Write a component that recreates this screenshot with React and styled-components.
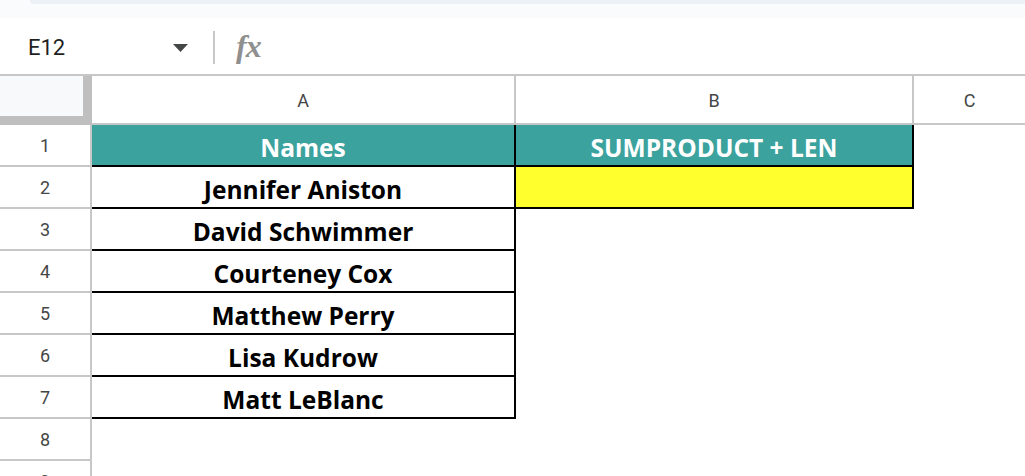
import styled, { createGlobalStyle } from 'styled-components';

const GlobalStyle = createGlobalStyle`
	html, body {
		margin: 0;
		padding: 0;
		background: #ffffff;
		font-family: Roboto, 'Liberation Sans', Arial, sans-serif;
	}
`;

const Page = styled.div`
	width: 1025px;
	height: 476px;
	overflow: hidden;
	background: #ffffff;
`;

const TopStrip = styled.div`
	height: 18px;
	background: #f9fbfd;
`;

const SearchEdge = styled.div`
	margin-left: 30px;
	height: 4px;
	background: #ebf1f7;
	border-bottom-left-radius: 8px;
`;

const FormulaBar = styled.div`
	height: 58px;
	display: flex;
	align-items: center;
	padding-top: 3px;
	border-bottom: 2px solid #c7c7c7;
	box-sizing: border-box;
`;

const NameBox = styled.div`
	width: 145px;
	padding-left: 28px;
	font-size: 22px;
	color: #1f1f1f;
`;

const Caret = styled.svg`
	width: 15px;
	height: 8px;
	margin-right: 25px;
`;

const Divider = styled.div`
	width: 2px;
	height: 33px;
	background: #c7c7c7;
	margin-right: 21px;
`;

const FxLabel = styled.span`
	font-family: 'Liberation Serif', 'DejaVu Serif', serif;
	font-style: italic;
	font-weight: bold;
	font-size: 32px;
	color: #8f8f8f;
	letter-spacing: -1px;
	margin-top: -2px;
`;

const Sheet = styled.div`
	display: grid;
	grid-template-columns: 92px 424px 398px 1fr;
	grid-auto-rows: 42px;
	grid-template-rows: 49px;
`;

const Corner = styled.div`
	box-sizing: border-box;
	background: #f8f9fa;
	border-right: 9px solid #bfbfbf;
	border-bottom: 9px solid #bfbfbf;
`;

const ColHead = styled.div`
	box-sizing: border-box;
	display: flex;
	align-items: center;
	justify-content: center;
	font-size: 18px;
	color: #444746;
	border-bottom: 2px solid #c7c7c7;
	border-right: ${(p) => (p.$last ? 'none' : '2px solid #c7c7c7')};
	padding-top: 2px;
`;

const RowHead = styled.div`
	box-sizing: border-box;
	display: flex;
	align-items: center;
	justify-content: center;
	font-size: 18px;
	color: #444746;
	border-right: 2px solid #c7c7c7;
	border-bottom: 2px solid #c7c7c7;
`;

const Cell = styled.div`
	box-sizing: border-box;
	display: flex;
	align-items: center;
	justify-content: center;
	padding-top: 5px;
	font-family: 'Open Sans', Lato, sans-serif;
	font-weight: 700;
	font-size: 24.5px;
	color: ${(p) => (p.$head ? '#ffffff' : '#000000')};
	background: ${(p) => p.$fill || 'transparent'};
	border-right: ${(p) => (p.$boxed ? '2px solid #000' : 'none')};
	border-bottom: ${(p) => (p.$boxed ? '2px solid #000' : 'none')};
`;

const names = [
	'Jennifer Aniston',
	'David Schwimmer',
	'Courteney Cox',
	'Matthew Perry',
	'Lisa Kudrow',
	'Matt LeBlanc',
];

const TEAL = '#3ba29e';
const YELLOW = '#ffff2e';

const App = () => {
	const rows = [];
	for (let r = 1; r <= 9; r++) {
		let a = null;
		let b = null;
		if (r === 1) {
			a = (
				<Cell $boxed $head $fill={TEAL}>
					Names
				</Cell>
			);
			b = (
				<Cell $boxed $head $fill={TEAL}>
					SUMPRODUCT + LEN
				</Cell>
			);
		} else if (r <= 7) {
			a = <Cell $boxed>{names[r - 2]}</Cell>;
			b = r === 2 ? <Cell $boxed $fill={YELLOW} /> : <Cell />;
		} else {
			a = <Cell />;
			b = <Cell />;
		}
		rows.push(
			<RowHead key={'h' + r}>{r}</RowHead>,
			<div key={'a' + r} style={{ display: 'contents' }}>
				{a}
			</div>,
			<div key={'b' + r} style={{ display: 'contents' }}>
				{b}
			</div>,
			<Cell key={'c' + r} />
		);
	}

	return (
		<Page>
			<GlobalStyle />
			<TopStrip>
				<SearchEdge />
			</TopStrip>
			<FormulaBar>
				<NameBox>E12</NameBox>
				<Caret viewBox="0 0 15 8">
					<path d="M0 0 L15 0 L7.5 8 Z" fill="#444746" />
				</Caret>
				<Divider />
				<FxLabel>fx</FxLabel>
			</FormulaBar>
			<Sheet>
				<Corner />
				<ColHead>A</ColHead>
				<ColHead>B</ColHead>
				<ColHead $last>C</ColHead>
				{rows}
			</Sheet>
		</Page>
	);
};

export default App;
